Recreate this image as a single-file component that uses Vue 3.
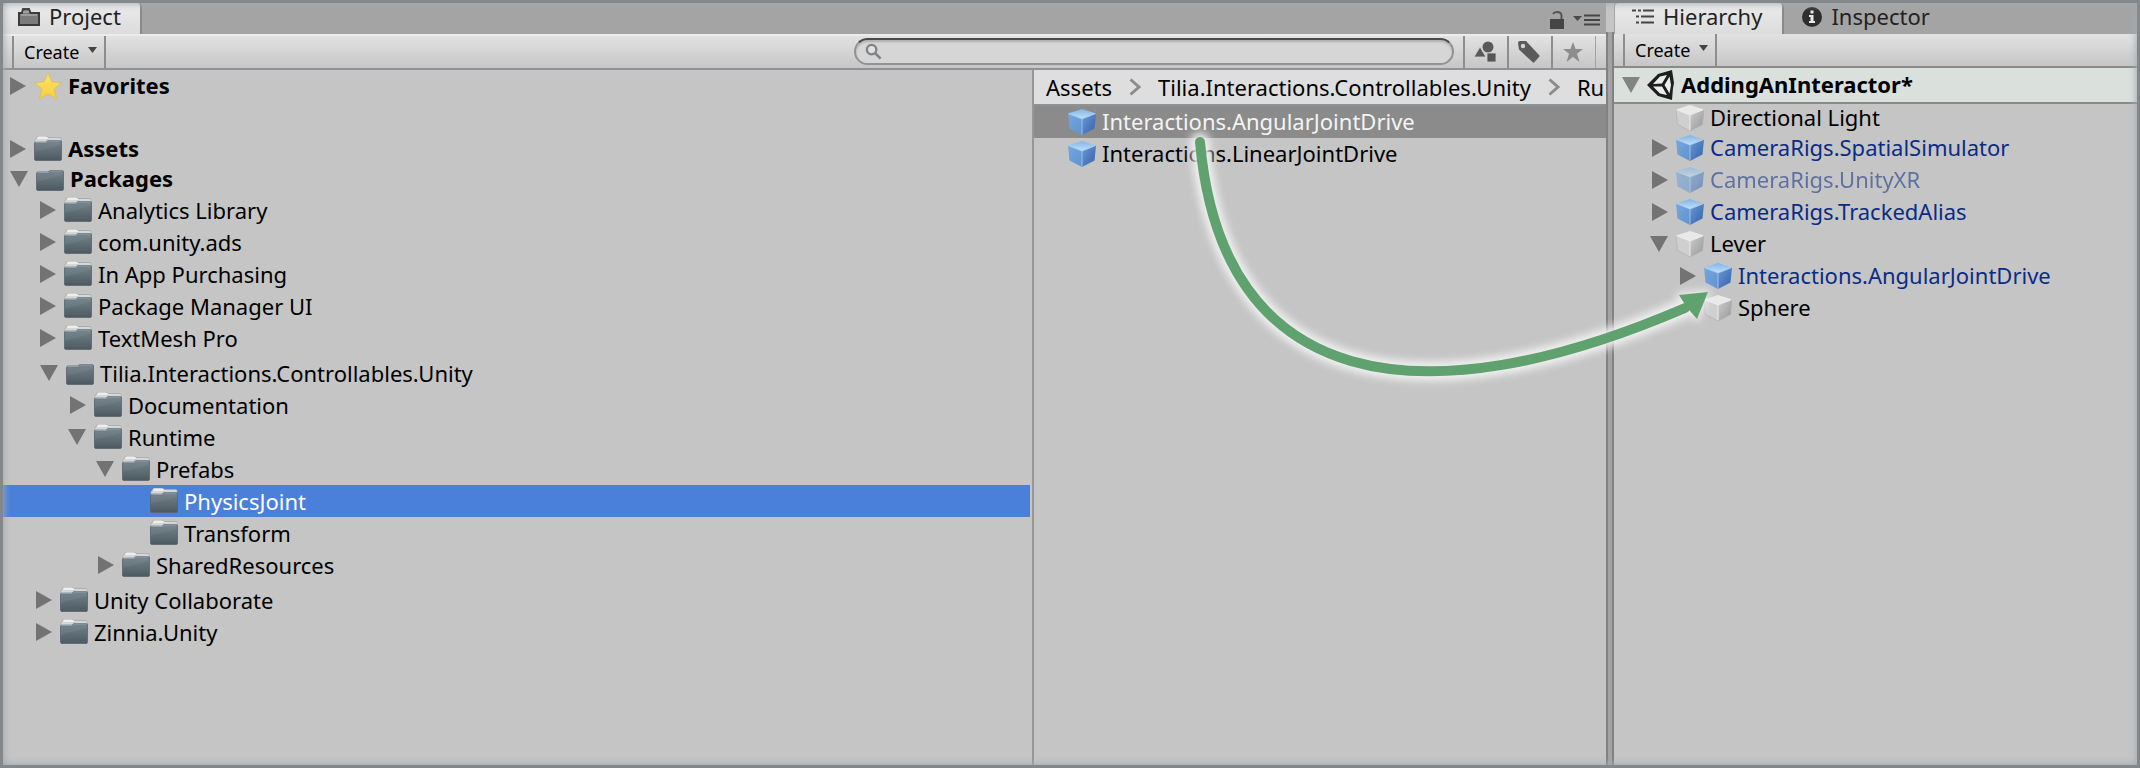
<script setup>
const tree = [
  { label: 'Favorites', icon: 'star', arrow: 'right', cls: 'favorites', bold: true, indent: 5 },
  { label: 'Assets', icon: 'folder', arrow: 'right', bold: true, indent: 5 },
  { label: 'Packages', icon: 'open', arrow: 'down', bold: true, indent: 7 },
  { label: 'Analytics Library', icon: 'folder', arrow: 'right', indent: 35 },
  { label: 'com.unity.ads', icon: 'folder', arrow: 'right', indent: 35 },
  { label: 'In App Purchasing', icon: 'folder', arrow: 'right', indent: 35 },
  { label: 'Package Manager UI', icon: 'folder', arrow: 'right', indent: 35 },
  { label: 'TextMesh Pro', icon: 'folder', arrow: 'right', indent: 35 },
  { label: 'Tilia.Interactions.Controllables.Unity', icon: 'open', arrow: 'down', cls: 'group', indent: 37 },
  { label: 'Documentation', icon: 'folder', arrow: 'right', indent: 65 },
  { label: 'Runtime', icon: 'folder', arrow: 'down', indent: 65 },
  { label: 'Prefabs', icon: 'folder', arrow: 'down', indent: 93 },
  { label: 'PhysicsJoint', icon: 'folder', arrow: '', cls: 'selected', indent: 121 },
  { label: 'Transform', icon: 'folder', arrow: '', indent: 121 },
  { label: 'SharedResources', icon: 'folder', arrow: 'right', indent: 93 },
  { label: 'Unity Collaborate', icon: 'folder', arrow: 'right', cls: 'group', indent: 31 },
  { label: 'Zinnia.Unity', icon: 'folder', arrow: 'right', indent: 31 },
]
const assets = [
  { label: 'Interactions.AngularJointDrive', selected: true },
  { label: 'Interactions.LinearJointDrive', selected: false },
]
const hierarchy = [
  { label: 'Directional Light', arrow: '', kind: 'plain', indent: 36 },
  { label: 'CameraRigs.SpatialSimulator', arrow: 'right', kind: 'prefab', indent: 36 },
  { label: 'CameraRigs.UnityXR', arrow: 'right', kind: 'prefab', dim: true, indent: 36 },
  { label: 'CameraRigs.TrackedAlias', arrow: 'right', kind: 'prefab', indent: 36 },
  { label: 'Lever', arrow: 'down', kind: 'plain', indent: 36 },
  { label: 'Interactions.AngularJointDrive', arrow: 'right', kind: 'prefab', indent: 64 },
  { label: 'Sphere', arrow: '', kind: 'plain', indent: 64 },
]
</script>

<template>
  <div class="editor">
    <svg class="defs" width="0" height="0" aria-hidden="true">
      <defs>
        <linearGradient id="folderFront" x1="0" y1="0" x2="0" y2="1">
          <stop offset="0" stop-color="#74838b" />
          <stop offset="1" stop-color="#4c5960" />
        </linearGradient>
        <linearGradient id="starFill" x1="0" y1="0" x2="0" y2="1">
          <stop offset="0" stop-color="#fbe36b" />
          <stop offset="1" stop-color="#f7cf3c" />
        </linearGradient>
        <linearGradient id="blueTop" x1="0" y1="0" x2="0" y2="1">
          <stop offset="0" stop-color="#7fb4e8" />
          <stop offset="1" stop-color="#c3e0f8" />
        </linearGradient>
        <linearGradient id="blueLeft" x1="0" y1="0" x2="1" y2="1">
          <stop offset="0" stop-color="#76a6dc" />
          <stop offset="1" stop-color="#5f94d0" />
        </linearGradient>
        <linearGradient id="blueRight" x1="0" y1="0" x2="1" y2="1">
          <stop offset="0" stop-color="#6a9bd8" />
          <stop offset="1" stop-color="#355fa8" />
        </linearGradient>
        <linearGradient id="grayRight" x1="0" y1="0" x2="1" y2="1">
          <stop offset="0" stop-color="#cdcdcd" />
          <stop offset="1" stop-color="#969696" />
        </linearGradient>
        <symbol id="folder" viewBox="0 0 28 26">
          <path d="M1 6V4q0-1 1-1l1-2q.4-1 1.500-1H12q1.500 0 2 1.500H26q1 0 1 1.500v5H1z" fill="#eeeeee" stroke="#a2a4a5" stroke-width=".8" />
          <path d="M2 4h11l2-1h11" fill="none" stroke="#bcbebf" />
          <path d="M.5 7.500Q.5 6 2 6h10l2-1.500h12q1.500 0 1.500 1.500v17q0 1.500-1.500 1.500H2Q.5 24.500.5 23z" fill="url(#folderFront)" stroke="#58656c" stroke-width=".8" />
          <path d="M1.500 6.500H12.500l2-1.500H26.500" fill="none" stroke="#8fa0ab" />
          <path d="M1 16 27 9V6H15l-2 1.500H1z" fill="#8593a0" opacity=".22" />
        </symbol>
        <symbol id="open" viewBox="0 0 28 26">
          <path d="M.5 7.500Q.5 6 2 6h10l2-1.500h12q1.500 0 1.500 1.500v17q0 1.500-1.500 1.500H2Q.5 24.500.5 23z" fill="url(#folderFront)" stroke="#58656c" stroke-width=".8" />
          <path d="M1.500 6.500H12.500l2-1.500H26.500" fill="none" stroke="#8fa0ab" />
          <path d="M1 16 27 9V6H15l-2 1.500H1z" fill="#8593a0" opacity=".22" />
        </symbol>
        <symbol id="star" viewBox="0 0 28 28">
          <path d="M14 1l3.900 8.800 9.300 1-7 6.300 2.300 9.700L14 22l-8.500 4.800 2.300-9.700-7-6.300 9.300-1z" fill="url(#starFill)" stroke="#e0bd4e" stroke-width=".8" />
        </symbol>
        <symbol id="prefab" viewBox="0 0 28 28">
          <path d="M14 1 28 5.500 14 11 0 5.500z" fill="url(#blueTop)" />
          <path d="M0 5.500 14 11V27L1.500 20.500z" fill="url(#blueLeft)" />
          <path d="M28 5.500 14 11V27l12.500-6.500z" fill="url(#blueRight)" />
          <path d="M.5 5.700 14 11 27.500 5.700M14 11V26.500" fill="none" stroke="#b4d6f4" stroke-width=".7" />
        </symbol>
        <symbol id="plain" viewBox="0 0 28 28">
          <path d="M14 1 28 5.500 14 11 0 5.500z" fill="#e9e9e9" />
          <path d="M0 5.500 14 11V27L1.500 20.500z" fill="#cfcfcf" />
          <path d="M28 5.500 14 11V27l12.500-6.500z" fill="url(#grayRight)" />
          <path d="M.5 5.700 14 11 27.500 5.700M14 11V26.500" fill="none" stroke="#f4f4f4" stroke-width=".8" />
          <path d="M0 5.500 1.500 20.500 14 27 26.500 20.500 28 5.500" fill="none" stroke="#ababab" stroke-width=".6" />
        </symbol>
        <symbol id="right" viewBox="0 0 18 18"><path d="M2 0 18 9 2 18z" fill="#737373" /></symbol>
        <symbol id="down" viewBox="0 0 18 18"><path d="M0 1H18L9 17z" fill="#737373" /></symbol>
        <symbol id="chevron" viewBox="0 0 12 18"><path d="M1.500 1.500 10 9l-8.500 7.500" fill="none" stroke="#8c8c8c" stroke-width="3" /></symbol>
      </defs>
    </svg>

    <section class="project">
      <header class="tabs">
        <button class="tab active project-tab">
          <svg width="22" height="18" viewBox="0 0 22 18"><path d="M1 5H4L5 1H11L12.500 5H21V17H1z" fill="#7b7b7b" stroke="#3b3b3b" stroke-width="2" /><path d="M3 7H19M5 4H11" stroke="#a9a9a9" stroke-width="1.500" /></svg>
          Project
        </button>
        <div class="tab-tools">
          <button class="bare" aria-label="Lock"><svg width="14" height="18" viewBox="0 0 14 18"><path d="M0 8H14V18H0z" fill="#444" /><path d="M3 3Q4 1 7 1q4.500 0 4.500 3.500V8" fill="none" stroke="#555" stroke-width="2" /></svg></button>
          <button class="bare" aria-label="Panel menu"><svg width="27" height="12" viewBox="0 0 27 12"><path d="M0 2H9L4.500 7z" fill="#4a4a4a" /><path d="M11 1.500H27M11 6H27M11 10.500H27" stroke="#444" stroke-width="2" /></svg></button>
        </div>
      </header>
      <div class="toolbar">
        <button class="create">Create <svg width="9" height="6" viewBox="0 0 9 6"><path d="M0 0H9L4.500 6z" fill="#444" /></svg></button>
        <label class="search">
          <svg width="17" height="17" viewBox="0 0 18 18"><circle cx="7" cy="7" r="5" fill="#dfe3e6" stroke="#828282" stroke-width="2.500" /><path d="M11 11 16.500 16.500" stroke="#828282" stroke-width="2.800" /></svg>
          <input type="text" aria-label="Search" />
        </label>
        <button class="tool" aria-label="Search by type"><svg width="22" height="22" viewBox="0 0 22 22"><circle cx="14" cy="6" r="5.500" fill="#5a5a5a" /><path d="M0 16 6 6 12 16z" fill="#5a5a5a" stroke="#d2d2d2" stroke-width=".8" /><path d="M13 12h9v9h-9z" fill="#555" stroke="#d2d2d2" stroke-width=".8" /></svg></button>
        <button class="tool" aria-label="Search by label"><svg width="22" height="22" viewBox="0 0 22 22"><path d="M0 2Q0 0 2 0H8L21 14q1 1 0 2l-4.500 5q-1 1-2 0L1 8.500z" fill="#5a5a5a" /><circle cx="5" cy="5" r="2.200" fill="#d4d4d4" /></svg></button>
        <button class="tool" aria-label="Save search"><svg width="20" height="20" viewBox="0 0 20 20"><path d="M10 0 12.600 7H20L14 11.700 16.500 20 10 15 3.500 20 6 11.700 0 7H7.400z" fill="#8c8c8c" /></svg></button>
        <span class="tool-end"></span>
      </div>
      <div class="panes">
        <ul class="tree">
          <li v-for="row in tree" :key="row.label" class="row" :class="[row.cls, { bold: row.bold }]" :style="{ paddingLeft: row.indent + 'px' }">
            <svg class="arrow" width="18" height="18"><use v-if="row.arrow" :href="'#' + row.arrow" /></svg>
            <svg class="icon" width="28" :height="row.icon === 'star' ? 28 : 26"><use :href="'#' + row.icon" /></svg>
            <span>{{ row.label }}</span>
          </li>
        </ul>
        <div class="contents">
          <nav class="crumbs" aria-label="Folder path">
            <a href="#">Assets</a>
            <svg width="12" height="18"><use href="#chevron" /></svg>
            <a href="#">Tilia.Interactions.Controllables.Unity</a>
            <svg width="12" height="18"><use href="#chevron" /></svg>
            <a href="#">Ru</a>
          </nav>
          <ul class="assets">
            <li v-for="a in assets" :key="a.label" class="row" :class="{ current: a.selected }">
              <svg class="icon" width="28" height="28"><use href="#prefab" /></svg>
              <span>{{ a.label }}</span>
            </li>
          </ul>
        </div>
      </div>
    </section>

    <div class="splitter"></div>

    <section class="side">
      <header class="tabs">
        <button class="tab active hierarchy-tab">
          <svg width="22" height="16" viewBox="0 0 22 16"><path d="M0 1.500H4M6 1.500H9M11 1.500H22M4 7.500H7M9 7.500H22M4 13.500H7M9 13.500H22" stroke="#444" stroke-width="2" /></svg>
          Hierarchy
        </button>
        <button class="tab inspector-tab">
          <svg width="20" height="20" viewBox="0 0 20 20"><circle cx="10" cy="10" r="10" fill="#2e2e2e" /><path d="M8.500 3.500h3v3h-3zM7 8h4.500v6H13v2H7v-2h1.500v-4H7z" fill="#e8e8e8" /></svg>
          Inspector
        </button>
      </header>
      <div class="toolbar side-bar">
        <button class="create">Create <svg width="9" height="6" viewBox="0 0 9 6"><path d="M0 0H9L4.500 6z" fill="#444" /></svg></button>
      </div>
      <div class="scene">
        <svg class="arrow" width="18" height="18" opacity=".85"><use href="#down" /></svg>
        <svg class="logo" width="27" height="30" viewBox="0 0 27 30"><path d="M0 15 11 4 25 0 27 13 26 18 25 30 11 26z" fill="#1e1e1e" /><path d="M6 14 13 6.500 20 5 15 13.500zM6 16.500 15 16.500 20 25 13 23.500zM17.500 15 22.500 6.500 24 15 22.500 23.500z" fill="#eceeed" /></svg>
        <strong>AddingAnInteractor*</strong>
      </div>
      <ul class="objects">
        <li v-for="o in hierarchy" :key="o.label" class="row" :class="[o.kind, { dim: o.dim }]" :style="{ paddingLeft: o.indent + 'px' }">
          <svg class="arrow" width="18" height="18"><use v-if="o.arrow" :href="'#' + o.arrow" /></svg>
          <svg class="icon" width="28" height="28"><use :href="'#' + o.kind" /></svg>
          <span>{{ o.label }}</span>
        </li>
      </ul>
    </section>

    <svg class="drag" width="540" height="270" viewBox="0 0 540 270" aria-hidden="true">
      <g class="halo">
        <path d="M20 22C42 271 240 302 505 188" />
        <path d="M499 175 528 172 517 199z" />
      </g>
      <path class="line" d="M20 22C42 271 240 302 505 188" />
      <path class="head" d="M499 175 528 172 517 199 510 191 504 183z" />
    </svg>
  </div>
</template>

<style>
body { background: #c4c4c4; }
</style>

<style scoped>
.editor {
  position: relative;
  display: flex;
  box-sizing: border-box;
  min-height: 100vh;
  overflow: hidden;
  border: 3px solid #82888c;
  background: #c5c5c5;
  color: #000;
  font: 22px/32px "Noto Sans", "Open Sans", sans-serif;
  white-space: nowrap;
}
.editor::after {
  content: "";
  position: absolute;
  inset: 0;
  pointer-events: none;
  box-shadow: inset 0 0 7px 1px #a4abb0;
}
.defs { position: absolute; }
ul { margin: 0; padding: 0; list-style: none; }
button { margin: 0; padding: 0; border: 0; background: none; color: inherit; font: inherit; }
svg { display: block; flex: none; }
a { color: inherit; text-decoration: none; }

.project { flex: 1; min-width: 0; display: flex; flex-direction: column; }
.side { flex: 0 0 523px; min-width: 0; }
.splitter {
  flex: 0 0 8px;
  box-sizing: border-box;
  margin-top: 29px;
  border: solid #828282;
  border-width: 0 2px;
  background: #a3a3a3;
}
.tabs { display: flex; height: 31px; background: #a4a4a4; }
.tab { display: flex; align-items: center; gap: 9px; padding-bottom: 4px; line-height: 27px; color: #222; }
.tab.active { background: linear-gradient(#ebebeb, #dcdcdc); border-right: 2px solid #8a8a8a; border-radius: 4px 4px 0 0; }
.project-tab { padding-left: 15px; padding-right: 19px; }
.hierarchy-tab { margin-left: 1px; padding-left: 17px; padding-right: 20px; }
.inspector-tab { padding-left: 18px; }
.tab-tools { display: flex; align-items: center; gap: 9px; margin: 3px 6px 0 auto; }
.toolbar {
  display: flex;
  box-sizing: border-box;
  height: 36px;
  padding-left: 9px;
  border-top: 2px solid #ececec;
  border-bottom: 2px solid #8d9296;
  background: linear-gradient(#e2e2e2, #c6c6c6);
}
.side-bar { height: 34px; border-top-width: 0; border-bottom-color: #8a8a8a; }
.create {
  display: flex;
  align-items: center;
  gap: 9px;
  padding: 0 7px 0 10px;
  border: solid #8d8d8d;
  border-width: 0 2px;
  font-size: 18px;
}
.create svg { margin-bottom: 4px; }
.search {
  display: flex;
  align-items: center;
  box-sizing: border-box;
  width: 600px;
  margin: 2px 9px 3px auto;
  padding-left: 9px;
  border: 2px solid #929292;
  border-top-color: #4a4a4a;
  border-radius: 14px;
  background: #d6d6d6;
  box-shadow: inset 0 2px 2px #b0b0b0;
}
.search input { flex: 1; min-width: 0; border: 0; outline: 0; background: none; font: inherit; line-height: 20px; }
.tool { display: flex; align-items: center; justify-content: center; width: 44px; box-sizing: border-box; padding-right: 3px; border-left: 2px solid #8d8d8d; }
.tool-end { width: 11px; box-sizing: border-box; border-left: 1px solid #a2a2a2; }

.panes { flex: 1; display: flex; }
.tree { flex: 1; min-width: 0; padding-right: 2px; }
.contents { flex: 0 0 572px; min-width: 0; border-left: 2px solid #979797; overflow: hidden; }
.row { display: flex; align-items: center; height: 32px; }
.arrow { margin-right: 8px; }
.icon { margin-right: 6px; }
.bold { height: 30px; font-weight: 700; }
.favorites { height: 32px; margin-bottom: 32px; }
.group { margin-top: 3px; }
.selected { background: #4a80d9; color: #fff; }
.bold span, .objects span, .assets span { padding-bottom: 2px; }
.crumbs {
  display: flex;
  align-items: center;
  gap: 17px;
  height: 34px;
  padding-left: 12px;
  border-bottom: 2px solid #8b9194;
  background: #dedede;
  overflow: hidden;
}
.assets .row { padding-left: 34px; }
.current { background: #8b8b8b; color: #f4f4f4; }

.scene { display: flex; align-items: center; height: 34px; padding-left: 8px; border-bottom: 2px solid #8a8a8a; background: #dae0dc; }
.scene .arrow { margin-right: 7px; }
.scene strong { padding-bottom: 2px; }
.logo { margin-right: 7px; }
.objects .row:first-child { height: 28px; }
.prefab { color: #0a2c85; }
.dim .icon, .dim span { opacity: .55; }

.drag { position: absolute; left: 1177px; top: 117px; pointer-events: none; overflow: visible; }
.line, .halo path:first-child { fill: none; stroke: #5fa270; stroke-width: 10; stroke-linecap: round; }
.head { fill: #5fa270; }
.halo { filter: blur(4px); }
.halo path:first-child { stroke: #f2f2f2; stroke-width: 19; }
.halo path:last-child { fill: #f2f2f2; stroke: #f2f2f2; stroke-width: 4; }
</style>
